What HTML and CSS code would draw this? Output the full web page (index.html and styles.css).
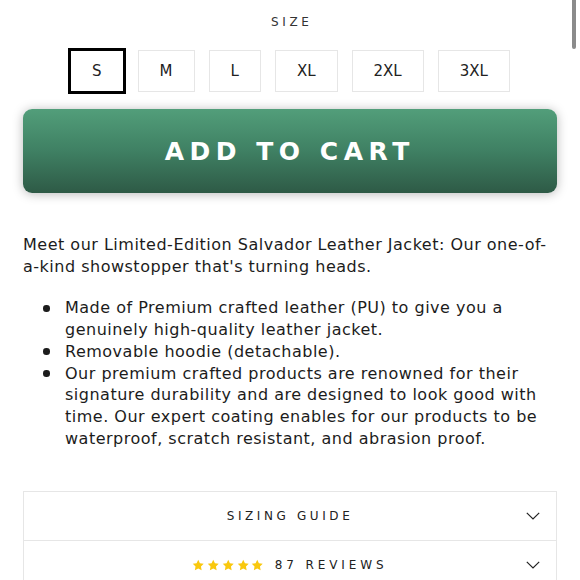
FILE: index.html
```html
<!DOCTYPE html>
<html lang="en">
<head>
<meta charset="utf-8">
<title>Salvador Leather Jacket</title>
<link rel="stylesheet" href="styles.css">
</head>
<body>
<div class="scroll-thumb"></div>
<main class="product">
  <section class="size-picker">
    <div class="size-label">SIZE</div>
    <div class="size-options">
      <button class="size-opt is-selected">S</button>
      <button class="size-opt">M</button>
      <button class="size-opt">L</button>
      <button class="size-opt">XL</button>
      <button class="size-opt">2XL</button>
      <button class="size-opt">3XL</button>
    </div>
  </section>

  <button class="add-to-cart">ADD TO CART</button>

  <section class="description">
    <p>Meet our Limited-Edition Salvador Leather Jacket: Our one-of-a-kind showstopper that's turning heads.</p>
    <ul>
      <li>Made of Premium crafted leather (PU) to give you a genuinely high-quality leather jacket.</li>
      <li>Removable hoodie (detachable).</li>
      <li>Our premium crafted products are renowned for their signature durability and are designed to look good with time. Our expert coating enables for our products to be waterproof, scratch resistant, and abrasion proof.</li>
    </ul>
  </section>

  <section class="accordion">
    <div class="acc-row">
      <span class="acc-spacer"></span>
      <span class="acc-title">SIZING GUIDE</span>
      <svg class="chevron" viewBox="0 0 14 8" width="14" height="8"><polyline points="0.8,0.8 7,7 13.2,0.8" fill="none" stroke="#222" stroke-width="1.2"/></svg>
    </div>
    <div class="acc-row">
      <span class="acc-spacer"></span>
      <span class="acc-title reviews">
        <span class="stars">
          <svg viewBox="0 0 24 24" width="12.5" height="12.5"><path d="M12 1.5l3.2 6.6 7.3 1-5.3 5.1 1.3 7.2L12 18l-6.5 3.4 1.3-7.2L1.5 9.1l7.3-1z" fill="#f9c80e"/></svg>
          <svg viewBox="0 0 24 24" width="12.5" height="12.5"><path d="M12 1.5l3.2 6.6 7.3 1-5.3 5.1 1.3 7.2L12 18l-6.5 3.4 1.3-7.2L1.5 9.1l7.3-1z" fill="#f9c80e"/></svg>
          <svg viewBox="0 0 24 24" width="12.5" height="12.5"><path d="M12 1.5l3.2 6.6 7.3 1-5.3 5.1 1.3 7.2L12 18l-6.5 3.4 1.3-7.2L1.5 9.1l7.3-1z" fill="#f9c80e"/></svg>
          <svg viewBox="0 0 24 24" width="12.5" height="12.5"><path d="M12 1.5l3.2 6.6 7.3 1-5.3 5.1 1.3 7.2L12 18l-6.5 3.4 1.3-7.2L1.5 9.1l7.3-1z" fill="#f9c80e"/></svg>
          <svg viewBox="0 0 24 24" width="12.5" height="12.5"><path d="M12 1.5l3.2 6.6 7.3 1-5.3 5.1 1.3 7.2L12 18l-6.5 3.4 1.3-7.2L1.5 9.1l7.3-1z" fill="#f9c80e"/></svg>
        </span>
        <span class="review-count">87 REVIEWS</span>
      </span>
      <svg class="chevron" viewBox="0 0 14 8" width="14" height="8"><polyline points="0.8,0.8 7,7 13.2,0.8" fill="none" stroke="#222" stroke-width="1.2"/></svg>
    </div>
  </section>
</main>
</body>
</html>
```

FILE: styles.css
```css
html, body {
  margin: 0;
  padding: 0;
  overflow: hidden;
  background: #ffffff;
}

body {
  font-family: "DejaVu Sans", "Open Sans", sans-serif;
  color: #1c1c1c;
}

.scroll-thumb {
  position: fixed;
  top: -4px;
  right: 4px;
  width: 4px;
  height: 53px;
  border-radius: 2px;
  background: #8b8b8b;
}

.product {
  padding: 0 23px;
}

.size-picker {
  display: flex;
  flex-direction: column;
  align-items: center;
}

.size-label {
  margin-top: 14px;
  font-size: 12px;
  line-height: 17px;
  letter-spacing: 3.6px;
  padding-left: 3.6px;
  color: #333;
}

.size-options {
  display: flex;
  justify-content: center;
  gap: 14px;
  margin-top: 19px;
}

.size-opt {
  box-sizing: border-box;
  height: 42px;
  padding: 0 21px;
  border: 1px solid #e6e6e6;
  background: #fff;
  font-family: "DejaVu Sans", sans-serif;
  font-size: 15px;
  color: #222;
  border-radius: 0;
}

.size-opt.is-selected {
  border-color: #000;
  box-shadow: 0 0 0 2px #000;
}

.add-to-cart {
  display: block;
  box-sizing: border-box;
  width: 100%;
  height: 84px;
  margin-top: 17px;
  border: 0;
  border-radius: 9px;
  background: linear-gradient(180deg, #529e7a 0%, #3f8063 50%, #2e5a46 100%);
  box-shadow: 0 1px 11px rgba(0, 0, 0, 0.28);
  color: #fff;
  font-family: "DejaVu Sans", sans-serif;
  font-weight: bold;
  font-size: 25px;
  letter-spacing: 5.5px;
  padding-left: 5.5px;
}

.description {
  margin-top: 41px;
  font-size: 16px;
  line-height: 21.7px;
  letter-spacing: 0.5px;
}

.description p {
  margin: 0 0 20px;
}

.description ul {
  margin: 0;
  padding-left: 42px;
  list-style: none;
}

.description li {
  position: relative;
}

.description li::before {
  content: "";
  position: absolute;
  left: -22px;
  top: 7.6px;
  width: 6.5px;
  height: 6.5px;
  border-radius: 50%;
  background: #1c1c1c;
}

.accordion {
  margin-top: 42px;
  border: 1px solid #e6e6e6;
  border-bottom: 0;
}

.acc-row {
  display: grid;
  grid-template-columns: 1fr auto 1fr;
  align-items: center;
  height: 48px;
  box-sizing: border-box;
  padding-right: 16px;
  padding-left: 16px;
}

.acc-row + .acc-row {
  border-top: 1px solid #e6e6e6;
}

.acc-title {
  font-size: 12px;
  letter-spacing: 3.6px;
  color: #222;
}

.chevron {
  justify-self: end;
  display: block;
}

.reviews {
  display: flex;
  align-items: center;
  gap: 11px;
}

.stars {
  display: flex;
  gap: 2.2px;
}

.stars svg {
  display: block;
}

.review-count {
  letter-spacing: 3.9px;
}
```
